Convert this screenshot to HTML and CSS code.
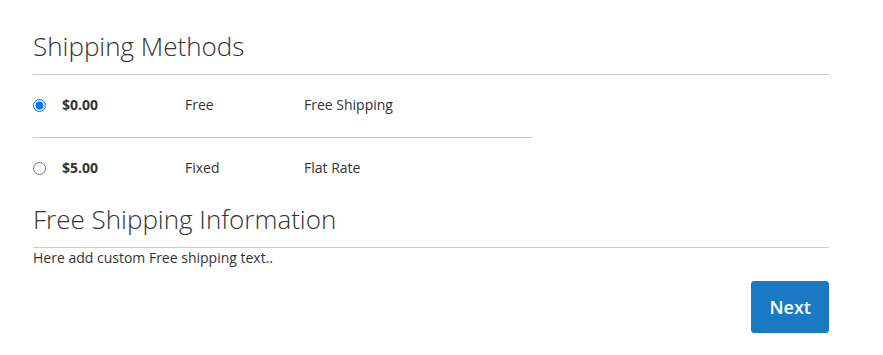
FILE: index.html
```html
<!DOCTYPE html>
<html lang="en">
<head>
<meta charset="utf-8">
<title>Shipping Methods</title>
<link rel="stylesheet" href="styles.css">
</head>
<body>
<div class="checkout">
  <h2 class="step-title first">Shipping Methods</h2>
  <div class="methods">
    <label class="method-row">
      <span class="col-radio"><input type="radio" name="ship" checked></span>
      <span class="col-price">$0.00</span>
      <span class="col-method">Free</span>
      <span class="col-carrier">Free Shipping</span>
    </label>
    <label class="method-row">
      <span class="col-radio"><input type="radio" name="ship"></span>
      <span class="col-price">$5.00</span>
      <span class="col-method">Fixed</span>
      <span class="col-carrier">Flat Rate</span>
    </label>
  </div>
  <h2 class="step-title">Free Shipping Information</h2>
  <p class="info">Here add custom Free shipping text..</p>
  <div class="actions">
    <button class="btn-primary" type="button">Next</button>
  </div>
</div>
</body>
</html>
```
FILE: styles.css
```css
html, body {
  margin: 0;
  padding: 0;
  background: #fff;
}
body {
  font-family: "Open Sans", "Noto Sans", sans-serif;
  font-size: 14px;
  line-height: 20px;
  color: #333;
}
.checkout {
  width: 796px;
  margin-left: 33px;
}
.step-title {
  margin: 0;
  font-size: 26px;
  font-weight: 300;
  line-height: 36px;
  color: #333;
  padding-bottom: 10px;
  border-bottom: 1px solid #ccc;
}
.step-title.first {
  margin-top: 28px;
}
.methods {
  width: 500px;
  display: flex;
  flex-direction: column;
}
.method-row {
  display: grid;
  grid-template-columns: 29px 123px 119px 1fr;
  align-items: center;
  padding: 20px 0 22px;
}
.method-row + .method-row {
  border-top: 1px solid #ccc;
  padding-top: 20px;
  padding-bottom: 23px;
}
.col-radio {
  display: flex;
  align-items: center;
}
.col-radio input {
  margin: 0;
  width: 13px;
  height: 13px;
}
.col-price {
  font-weight: 700;
}
.info {
  margin: 0;
}
.actions {
  display: flex;
  justify-content: flex-end;
  margin-top: 13px;
}
.btn-primary {
  font-family: "Open Sans", "Noto Sans", sans-serif;
  font-size: 18px;
  font-weight: 600;
  line-height: 22px;
  color: #fff;
  background: #1979c3;
  border: 1px solid #1979c3;
  border-radius: 3px;
  padding: 14px 17px;
  cursor: pointer;
}
```
